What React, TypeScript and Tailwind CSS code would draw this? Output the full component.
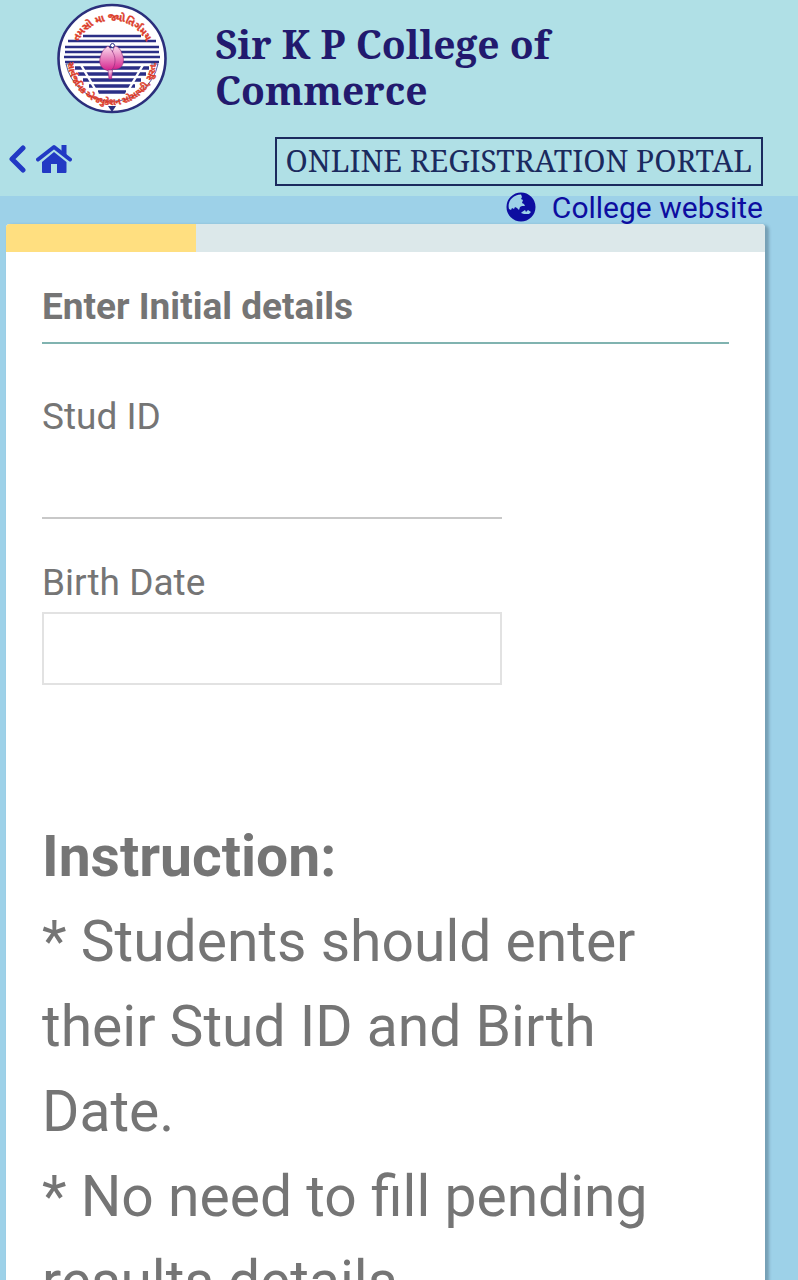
import React, { useState } from "react"

const RULES = [
  { y: 36, x1: 33, x2: 91 },
  { y: 41, x1: 18, x2: 106 },
  { y: 47, x1: 15, x2: 109 },
  { y: 52, x1: 15, x2: 109 },
  { y: 57, x1: 14, x2: 110 },
  { y: 62, x1: 15, x2: 109 },
]

function Crest() {
  return (
    <svg viewBox="7 3 110 111" className="h-[111px] w-[110px] shrink-0" role="img" aria-label="College crest">
      <circle cx="62" cy="58.5" r="53.5" fill="#fff" stroke="#2b2f7c" strokeWidth="2.6" />
      <g stroke="#2b2f86" strokeWidth="2.4">
        {RULES.map((r) => (
          <line key={r.y} x1={r.x1} x2={r.x2} y1={r.y} y2={r.y} />
        ))}
        <path d="M25 68H99M28 74H96M33 80H91M39 86H85M48 92H76" strokeWidth="3.6" />
      </g>
      <path d="M31 65L48 94M93 65L76 94" fill="none" stroke="#fff" strokeWidth="2.4" />
      <path d="M16 64H23M108 64H101M16 64A47 47 0 0 0 108 64" fill="none" stroke="#2b2f86" strokeWidth="0.8" />
      <path d="M58 106h8L62 112z" fill="#2b2f7c" />
      <defs>
        <linearGradient id="petal" x1="0" y1="0" x2="0" y2="1">
          <stop offset="0" stopColor="#fbdcee" />
          <stop offset="1" stopColor="#d4218c" />
        </linearGradient>
        <path id="arc-top" d="M25 50A38 38 0 0 1 99 50" />
        <path id="arc-bottom" d="M18 61A44 44 0 0 0 106 61" />
      </defs>
      <circle cx="62.5" cy="45.5" r="2" fill="#fff" stroke="#2b2f86" />
      <g fill="url(#petal)" stroke="#8d2a78" strokeWidth="0.6">
        <path d="M62 69C74 71 75 60 72 54C71 50 69 47 65 46C62 50 60 60 62 69z" />
        <path d="M60 71C50 70 48 62 51 55C52 51 55 48 58 46C61 49 65 54 65 60C65 66 63 69 60 71z" />
        <path d="M58 70h4.500l-1 9h-2.500z" />
      </g>
      <g fill="#dc3d2b" stroke="#dc3d2b" strokeWidth="0.4" fontWeight="700" className="font-['Noto_Sans_Gujarati','Noto_Sans',sans-serif]">
        <text fontSize="10" textAnchor="middle">
          <textPath href="#arc-top" startOffset="50%">તમસો મા જ્યોતિર્ગમય</textPath>
        </text>
        <text fontSize="9" textAnchor="middle">
          <textPath href="#arc-bottom" startOffset="50%">સાર્વજનિક એજ્યુકેશન સોસાયટી, સુરત.</textPath>
        </text>
      </g>
    </svg>
  )
}

function HomeIcon() {
  return (
    <svg viewBox="0 0 36 30" className="h-[30px] w-9" aria-hidden="true">
      <path d="M2 15.500L18 3L34 15.500" fill="none" stroke="currentColor" strokeWidth="4" strokeLinecap="round" strokeLinejoin="round" />
      <path d="M25.500 1H30.500V12L25.500 8z" fill="currentColor" />
      <path d="M18 8L30.500 18V28Q30.500 29 29.500 29H21V20H15V29H7Q6 29 6 28V18z" fill="currentColor" />
    </svg>
  )
}

function GlobeIcon() {
  return (
    <svg viewBox="0 0 30 30" className="mb-[2px] size-[30px]" aria-hidden="true">
      <path
        fill="currentColor"
        fillRule="evenodd"
        d="M15 .5a14.500 14.500 0 1 0 0 29a14.500 14.500 0 0 0 0-29zM15 2.500L16 5L15 7L17 8L16 11L18 12L19 14L16 14L14 15L13 18L11 16L9 15L8 17L6 16L5 18L3 17C1 9 7 3 15 2.500zM16 20L19 18L20 20L22 18L25 20L23 22L18 22L15 21z"
      />
    </svg>
  )
}

export default function App() {
  const [studId, setStudId] = useState("")
  const [birthDate, setBirthDate] = useState("")

  return (
    <div className="min-h-screen bg-[#9dd1e8] font-[Roboto,sans-serif] text-[#757575]">
      <header className="bg-[#b0e0e6] pb-[10px] pt-[3px]">
        <div className="flex h-[134px] items-start pl-[57px]">
          <Crest />
          <h1 className="ml-12 mt-[18px] w-[400px] font-['Noto_Serif',serif] text-[39px] font-bold leading-[46px] text-[#221a6e]">
            Sir K P College of Commerce
          </h1>
        </div>
        <div className="flex items-start justify-between pl-[9px] pr-[35px]">
          <nav className="flex items-center gap-[10px] pt-[7px] text-[#2239c4]">
            <a href="#back" aria-label="Back">
              <svg viewBox="0 0 17 28" className="h-7 w-[17px]" fill="none" stroke="currentColor" strokeWidth="5" strokeLinecap="round" strokeLinejoin="round">
                <path d="M14 3L3 14L14 25" />
              </svg>
            </a>
            <a href="#home" aria-label="Home">
              <HomeIcon />
            </a>
          </nav>
          <div className="border-2 border-[#1b2a5e] px-[9px] pb-[2px] font-['Noto_Serif',serif] text-[30px] leading-[43px] text-[#1b2a5e]">
            ONLINE REGISTRATION PORTAL
          </div>
        </div>
      </header>

      <div className="-mt-1 flex justify-end pr-[35px]">
        <a href="#website" className="flex h-8 items-center gap-4 text-[30px] leading-8 text-[#0d0da0]">
          <GlobeIcon />
          College website
        </a>
      </div>

      <main className="ml-[6px] mr-[33px] rounded-t bg-white shadow-[3px_2px_3px_1px_rgba(70,100,120,0.45)]">
        <div className="h-7 overflow-hidden rounded-t bg-[#dce8ea]">
          <div className="h-full w-1/4 bg-[#ffdf80]" />
        </div>
        <form className="px-9 pt-8" onSubmit={(e) => e.preventDefault()}>
          <h2 className="border-b-2 border-[#80b3b0] pb-[12px] text-[37px] font-bold leading-[46px]">
            Enter Initial details
          </h2>
          <label htmlFor="stud-id" className="mt-[50px] block text-[37px] leading-[46px]">
            Stud ID
          </label>
          <input
            id="stud-id"
            value={studId}
            onChange={(e) => setStudId(e.target.value)}
            className="block h-[79px] w-[67%] border-b-2 border-[#c8c8c8] text-[37px] outline-none"
          />
          <label htmlFor="birth-date" className="mt-[41px] block text-[37px] leading-[46px]">
            Birth Date
          </label>
          <input
            id="birth-date"
            value={birthDate}
            onChange={(e) => setBirthDate(e.target.value)}
            className="mt-[6px] block h-[73px] w-[67%] border-2 border-[#e2e2e2] px-3 text-[37px] outline-none"
          />
        </form>
        <section className="px-9 pt-[129px] text-[57px] leading-[85px]">
          <h3 className="font-bold">Instruction:</h3>
          <p>* Students should enter their Stud ID and Birth Date.</p>
          <p>* No need to fill pending results details.</p>
        </section>
      </main>
    </div>
  )
}
